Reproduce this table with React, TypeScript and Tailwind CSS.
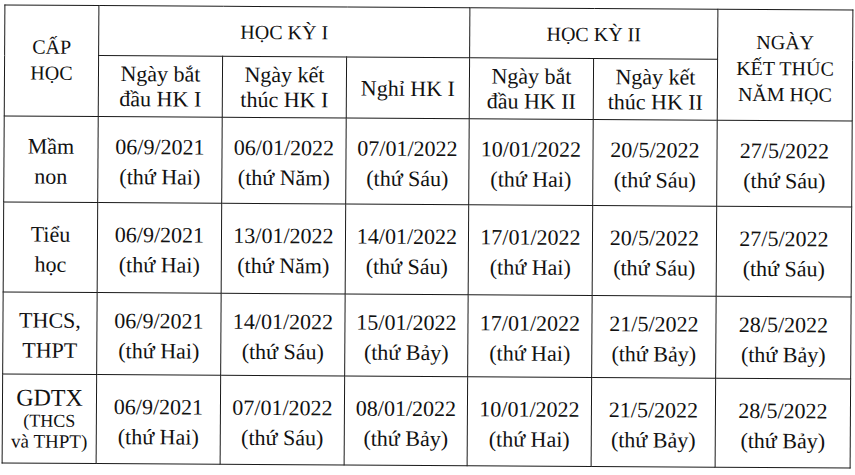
const rows = [
  {
    level: ["Mầm", "non"],
    cells: [
      ["06/9/2021", "thứ Hai"],
      ["06/01/2022", "thứ Năm"],
      ["07/01/2022", "thứ Sáu"],
      ["10/01/2022", "thứ Hai"],
      ["20/5/2022", "thứ Sáu"],
      ["27/5/2022", "thứ Sáu"],
    ],
    h: "h-[86px]",
  },
  {
    level: ["Tiểu", "học"],
    cells: [
      ["06/9/2021", "thứ Hai"],
      ["13/01/2022", "thứ Năm"],
      ["14/01/2022", "thứ Sáu"],
      ["17/01/2022", "thứ Hai"],
      ["20/5/2022", "thứ Sáu"],
      ["27/5/2022", "thứ Sáu"],
    ],
    h: "h-[90px]",
  },
  {
    level: ["THCS,", "THPT"],
    cells: [
      ["06/9/2021", "thứ Hai"],
      ["14/01/2022", "thứ Sáu"],
      ["15/01/2022", "thứ Bảy"],
      ["17/01/2022", "thứ Hai"],
      ["21/5/2022", "thứ Bảy"],
      ["28/5/2022", "thứ Bảy"],
    ],
    h: "h-[82px]",
  },
];

const gdtx = [
  ["06/9/2021", "thứ Hai"],
  ["07/01/2022", "thứ Sáu"],
  ["08/01/2022", "thứ Bảy"],
  ["10/01/2022", "thứ Hai"],
  ["21/5/2022", "thứ Bảy"],
  ["28/5/2022", "thứ Bảy"],
];

const cell = "border-[1.5px] border-[#1a1a1a] text-center align-middle p-0";

const DateCell = ({ d }: { d: string[] }) => (
  <td className={`${cell} leading-[30px] pt-[5px]`}>
    <div>{d[0]}</div>
    <div>({d[1]})</div>
  </td>
);

export default function App() {
  return (
    <div className="w-[855px] h-[475px] overflow-hidden bg-white pl-[3px] pt-[7px] font-['Liberation_Serif',serif] text-[#111] text-[22px]">
      <table className="border-collapse table-fixed w-[848px] rotate-[0.35deg]">
        <colgroup>
          <col className="w-[94px]" />
          <col className="w-[124px]" />
          <col className="w-[124px]" />
          <col className="w-[123px]" />
          <col className="w-[124px]" />
          <col className="w-[124px]" />
          <col className="w-[135px]" />
        </colgroup>
        <thead>
          <tr className="h-[50px]">
            <th rowSpan={2} className={`${cell} font-normal text-[20px] leading-[26px] pb-[2px]`}>
              <div>CẤP</div>
              <div>HỌC</div>
            </th>
            <th colSpan={3} className={`${cell} font-normal text-[20px]`}>HỌC KỲ I</th>
            <th colSpan={2} className={`${cell} font-normal text-[20px]`}>HỌC KỲ II</th>
            <th rowSpan={2} className={`${cell} font-normal text-[20px] leading-[26px] pt-[6px]`}>
              <div>NGÀY</div>
              <div>KẾT THÚC</div>
              <div>NĂM HỌC</div>
            </th>
          </tr>
          <tr className="h-[61px]">
            <th className={`${cell} font-normal text-[22px] leading-[25px]`}>
              <div>Ngày bắt</div>
              <div>đầu HK I</div>
            </th>
            <th className={`${cell} font-normal text-[22px] leading-[25px]`}>
              <div>Ngày kết</div>
              <div>thúc HK I</div>
            </th>
            <th className={`${cell} font-normal text-[22px]`}>Nghỉ HK I</th>
            <th className={`${cell} font-normal text-[22px] leading-[25px]`}>
              <div>Ngày bắt</div>
              <div>đầu HK II</div>
            </th>
            <th className={`${cell} font-normal text-[22px] leading-[25px]`}>
              <div>Ngày kết</div>
              <div>thúc HK II</div>
            </th>
          </tr>
        </thead>
        <tbody>
          {rows.map((r, i) => (
            <tr key={i} className={r.h}>
              <td className={`${cell} leading-[30px] pt-[4px]`}>
                <div>{r.level[0]}</div>
                <div>{r.level[1]}</div>
              </td>
              {r.cells.map((d, j) => (
                <DateCell key={j} d={d} />
              ))}
            </tr>
          ))}
          <tr className="h-[89px]">
            <td className={`${cell}`}>
              <div className="text-[24px] leading-[24px]">GDTX</div>
              <div className="text-[18px] leading-[22px]">(THCS</div>
              <div className="text-[19px] leading-[20px]">và THPT)</div>
            </td>
            {gdtx.map((d, j) => (
              <DateCell key={j} d={d} />
            ))}
          </tr>
        </tbody>
      </table>
    </div>
  );
}
